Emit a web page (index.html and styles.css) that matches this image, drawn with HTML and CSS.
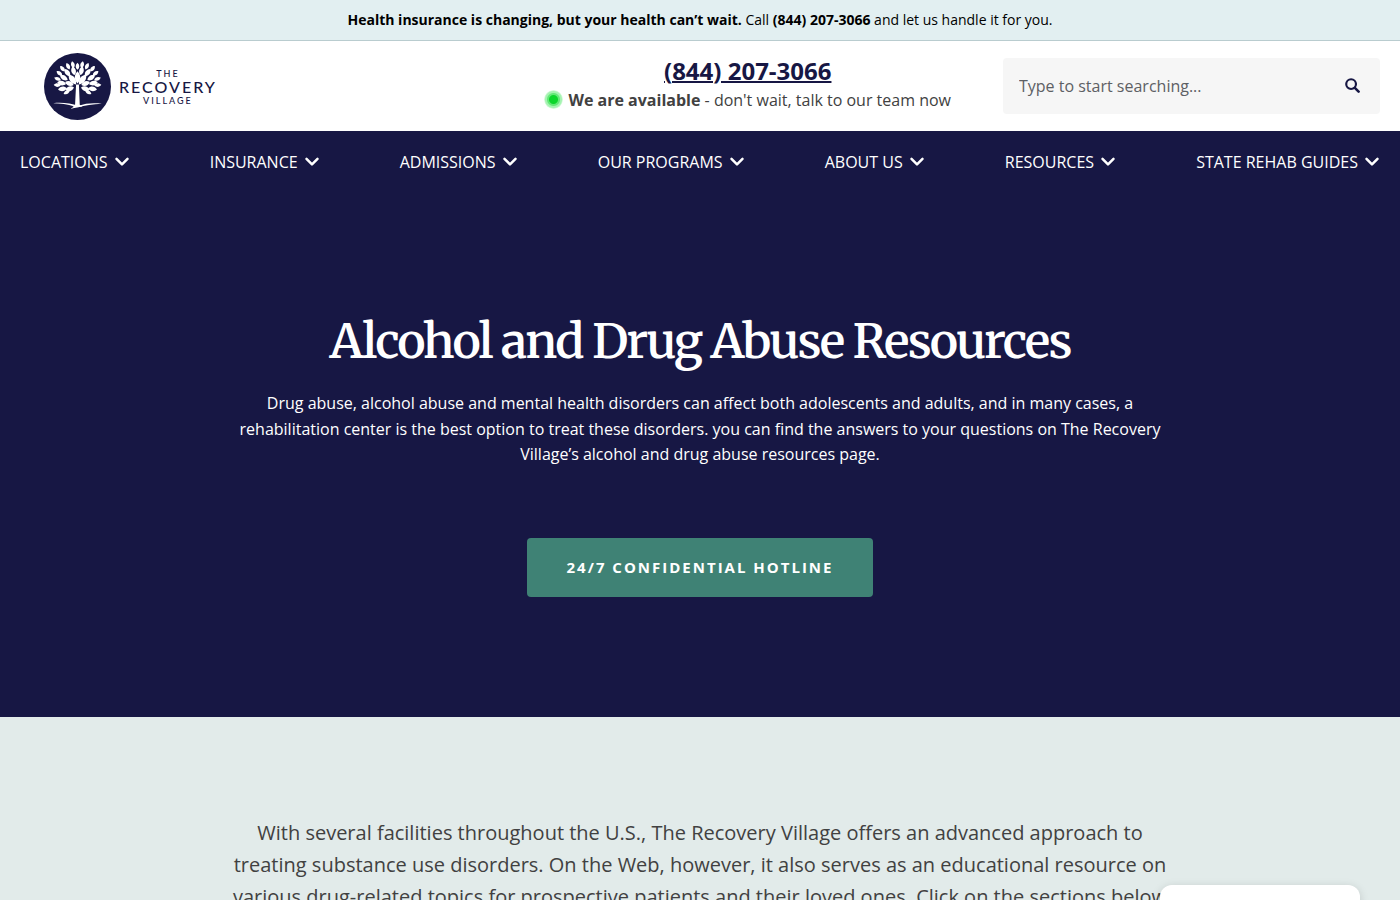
FILE: index.html
```html
<!DOCTYPE html>
<html lang="en">
<head>
<meta charset="utf-8">
<meta name="viewport" content="width=device-width, initial-scale=1">
<title>Alcohol and Drug Abuse Resources | The Recovery Village</title>
<link rel="stylesheet" href="styles.css">
</head>
<body>
<svg class="defs" aria-hidden="true">
  <symbol id="chevron" viewBox="0 0 14 10"><path d="M1.500 1.800 7 7.400 12.500 1.800" fill="none" stroke="currentColor" stroke-width="2.500" stroke-linecap="round" stroke-linejoin="round"/></symbol>
</svg>
<div class="notice"><p><strong>Health insurance is changing, but your health can’t wait.</strong> Call <strong>(844) 207-3066</strong> and let us handle it for you.</p></div>
<header class="header">
  <a class="logo" href="#" aria-label="The Recovery Village">
    <svg class="logo-mark" viewBox="0 0 66 66" aria-hidden="true">
      <defs>
        <path id="big" d="M0-6C3.600-2.500 3.600 2.500 0 6-3.600 2.500-3.600-2.500 0-6Z"/>
        <path id="leaf" d="M0-4.400C3-2 3 2 0 4.400-3 2-3-2 0-4.400Z"/>
        <path id="tip" d="M0-3.500C2.400-1.400 2.400 1.400 0 3.500-2.400 1.400-2.400-1.400 0-3.500Z"/>
      </defs>
      <circle cx="33" cy="33" r="33" fill="#171744"/>
      <g fill="#fff">
        <g transform="translate(33 33)">
          <use href="#big" y="-9"/>
          <use href="#big" transform="rotate(36) translate(0 -8.500)"/>
          <use href="#big" transform="rotate(-36) translate(0 -8.500)"/>
          <use href="#leaf" transform="rotate(70) translate(0 -8.500)"/>
          <use href="#leaf" transform="rotate(-70) translate(0 -8.500)"/>
          <use href="#leaf" transform="rotate(106) translate(0 -8)"/>
          <use href="#leaf" transform="rotate(-106) translate(0 -8)"/>
          <use href="#leaf" transform="rotate(14) translate(0 -16)"/>
          <use href="#leaf" transform="rotate(-14) translate(0 -16)"/>
          <use href="#leaf" transform="rotate(36) translate(0 -17)"/>
          <use href="#leaf" transform="rotate(-36) translate(0 -17)"/>
          <use href="#leaf" transform="rotate(57) translate(0 -16)"/>
          <use href="#leaf" transform="rotate(-57) translate(0 -16)"/>
          <use href="#leaf" transform="rotate(78) translate(0 -16)"/>
          <use href="#leaf" transform="rotate(-78) translate(0 -16)"/>
          <use href="#leaf" transform="rotate(99) translate(0 -15)"/>
          <use href="#leaf" transform="rotate(-99) translate(0 -15)"/>
          <use href="#tip" y="-20"/>
          <use href="#tip" transform="rotate(12) translate(0 -22)"/>
          <use href="#tip" transform="rotate(-12) translate(0 -22)"/>
          <use href="#tip" transform="rotate(25) translate(0 -22)"/>
          <use href="#tip" transform="rotate(-25) translate(0 -22)"/>
          <use href="#tip" transform="rotate(40) translate(0 -23)"/>
          <use href="#tip" transform="rotate(-40) translate(0 -23)"/>
          <use href="#tip" transform="rotate(54) translate(0 -22)"/>
          <use href="#tip" transform="rotate(-54) translate(0 -22)"/>
          <use href="#tip" transform="rotate(69) translate(0 -21)"/>
          <use href="#tip" transform="rotate(-69) translate(0 -21)"/>
          <use href="#tip" transform="rotate(86) translate(0 -20)"/>
          <use href="#tip" transform="rotate(-86) translate(0 -20)"/>
          <use href="#tip" transform="rotate(118) translate(0 -12)"/>
          <use href="#tip" transform="rotate(-118) translate(0 -12)"/>
        </g>
        <path d="M31.600 31h2.800l.800 20 2.600 2h-9.600l2.400-2Z"/>
        <path d="M9 49.500c8-1 17 0 25 2.500 7-2.500 15-3 23-2-9 .500-17 1.500-23 3.500l-8 1.500 4-2.200C23 50.500 16 49.500 9 49.500Z"/>
      </g>
    </svg>
    <span class="logo-text"><span class="logo-small">THE</span><span class="logo-name">RECOVERY</span><span class="logo-small">VILLAGE</span></span>
  </a>
  <div class="contact">
    <a class="phone" href="tel:8442073066">(844) 207-3066</a>
    <p class="status"><span class="dot"></span><span><strong>We are available</strong> - don't wait, talk to our team now</span></p>
  </div>
  <form class="search" role="search">
    <input class="search-input" type="search" aria-label="Search" placeholder="Type to start searching...">
    <button class="search-button" type="button" aria-label="Search"><svg class="search-icon" viewBox="0 0 16 16" fill="none" stroke="currentColor" stroke-linecap="round" aria-hidden="true"><circle cx="6.500" cy="6.500" r="5.200" stroke-width="2.300"/><path d="m10.500 10.500 4 4" stroke-width="2.800"/></svg></button>
  </form>
</header>
<nav class="nav" aria-label="Main">
  <button class="nav-item" type="button">LOCATIONS <svg class="chevron"><use href="#chevron"/></svg></button>
  <button class="nav-item" type="button">INSURANCE <svg class="chevron"><use href="#chevron"/></svg></button>
  <button class="nav-item" type="button">ADMISSIONS <svg class="chevron"><use href="#chevron"/></svg></button>
  <button class="nav-item" type="button">OUR PROGRAMS <svg class="chevron"><use href="#chevron"/></svg></button>
  <button class="nav-item" type="button">ABOUT US <svg class="chevron"><use href="#chevron"/></svg></button>
  <button class="nav-item" type="button">RESOURCES <svg class="chevron"><use href="#chevron"/></svg></button>
  <button class="nav-item" type="button">STATE REHAB GUIDES <svg class="chevron"><use href="#chevron"/></svg></button>
</nav>
<main>
  <section class="hero">
    <h1 class="title">Alcohol and Drug Abuse Resources</h1>
    <p class="lead">Drug abuse, alcohol abuse and mental health disorders can affect both adolescents and adults, and in many cases, a rehabilitation center is the best option to treat these disorders. you can find the answers to your questions on The Recovery Village’s alcohol and drug abuse resources page.</p>
    <a class="cta" href="tel:8442073066">24/7 CONFIDENTIAL HOTLINE</a>
  </section>
  <section class="intro">
    <p class="intro-text">With several facilities throughout the U.S., The Recovery Village offers an advanced approach to treating substance use disorders. On the Web, however, it also serves as an educational resource on various drug-related topics for prospective patients and their loved ones. Click on the sections below</p>
  </section>
</main>
<aside class="chat" aria-label="Chat"></aside>
</body>
</html>
```
FILE: styles.css
```css
* { box-sizing: border-box; }
body {
  margin: 0;
  height: 100vh;
  overflow: hidden;
  background: #e2ebea;
  color: #414141;
  font-family: "Open Sans", sans-serif;
  font-size: 16px;
}
p, h1 { margin: 0; }
button, input { font: inherit; border: 0; background: none; }
.defs { display: none; }
.notice {
  padding: 10px 20px;
  background: #e2eff1;
  border-bottom: 1px solid #b9cccf;
  color: #000;
  font-size: 14px;
  line-height: 20px;
  text-align: center;
}
.header {
  display: grid;
  grid-template-columns: 1fr auto minmax(200px, 377px);
  align-items: center;
  column-gap: 52px;
  padding: 10px 20px 11px;
  background: #fff;
}
.logo {
  display: flex;
  align-items: center;
  gap: 8px;
  padding: 2px 0 0 24px;
  color: #171744;
  text-decoration: none;
}
.logo-mark { width: 67px; height: 67px; }
.logo-text {
  display: flex;
  flex-direction: column;
  align-items: center;
  font-family: Lato, sans-serif;
  font-weight: 500;
}
.logo-small { font-size: 9px; line-height: 11px; letter-spacing: 2px; }
.logo-name { font-size: 16px; line-height: 16px; letter-spacing: 2px; }
.contact {
  display: flex;
  flex-direction: column;
  align-items: center;
  padding-bottom: 4px;
}
.phone {
  color: #171744;
  font-size: 24px;
  line-height: 32px;
  font-weight: 700;
  text-decoration-thickness: 2px;
}
.status {
  display: flex;
  align-items: center;
  gap: 5px;
  font-weight: 500;
  line-height: 26px;
}
.dot {
  width: 19px;
  height: 19px;
  border-radius: 50%;
  background: radial-gradient(circle, #0bd62b 0 4px, #63e877 5px 6px, #a5f3b1 7px 8px, #ffffff 10px);
}
.search {
  display: flex;
  align-items: center;
  height: 56px;
  background: #f6f6f6;
  border-radius: 4px;
}
.search-input { flex: 1; min-width: 0; padding: 0 16px; height: 100%; color: #5d6064; }
.search-input::placeholder { color: #5d6064; opacity: 1; }
.search-button { display: flex; padding: 20px; color: #171744; }
.search-icon { width: 15px; height: 15px; }
.nav {
  display: flex;
  justify-content: space-between;
  padding: 18px 20px;
  background: #171744;
}
.nav-item {
  display: flex;
  align-items: center;
  gap: 6px;
  padding: 0;
  color: #fff;
  font-weight: 500;
  line-height: 26px;
}
.chevron { width: 16px; height: 10px; }
.hero {
  display: flex;
  flex-direction: column;
  align-items: center;
  padding: 116px 20px 120px;
  background: #171744;
  color: #fff;
  text-align: center;
}
.title {
  font-family: Merriweather, "Noto Serif", "Liberation Serif", serif;
  font-size: 48px;
  line-height: 64px;
  font-weight: 600;
  letter-spacing: -2px;
}
.lead { max-width: 940px; margin-top: 18px; line-height: 1.6; }
.cta {
  margin-top: 70px;
  padding: 17px 40px 18px;
  background: #3f8275;
  border-radius: 4px;
  color: #fff;
  font-size: 15px;
  line-height: 24px;
  font-weight: 700;
  letter-spacing: 2px;
  text-decoration: none;
}
.intro { padding: 100px 20px; text-align: center; }
.intro-text { max-width: 940px; margin: 0 auto; font-size: 20px; line-height: 32px; }
.chat {
  position: fixed;
  right: 40px;
  bottom: -45px;
  width: 200px;
  height: 60px;
  border-radius: 12px;
  background: #fff;
  box-shadow: 0 2px 10px rgba(0, 0, 0, .15);
}
```
